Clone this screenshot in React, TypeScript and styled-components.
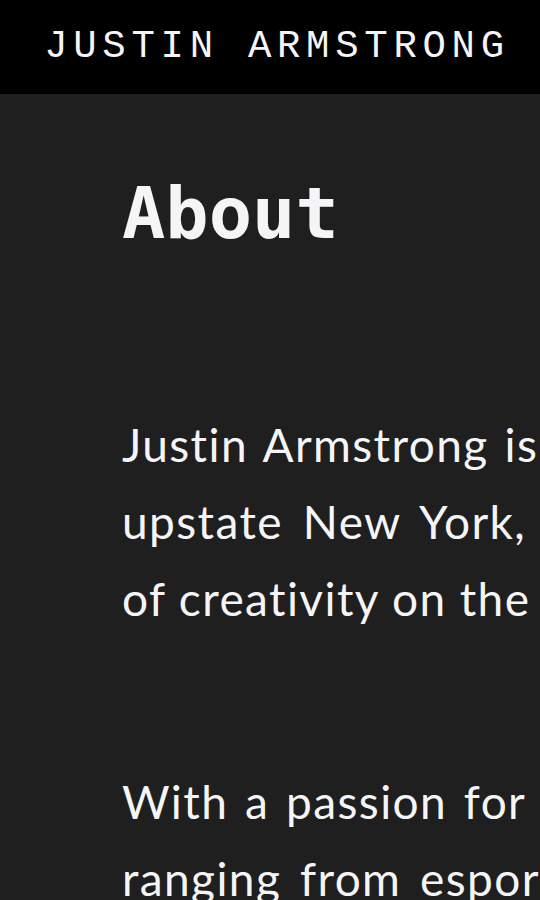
import React from "react";
import styled, { createGlobalStyle } from "styled-components";

const GlobalStyle = createGlobalStyle`
  html, body {
    margin: 0;
    padding: 0;
    background: #1f1f1f;
    overflow-x: hidden;
  }
  body {
    font-family: Lato, "Open Sans", sans-serif;
    color: #f5f5f7;
  }
`;

const Page = styled.div`
  min-height: 900px;
  background: #1f1f1f;
  display: flex;
  flex-direction: column;
`;

const Header = styled.header`
  height: 94px;
  background: #000;
  display: flex;
  align-items: center;
  justify-content: center;
  padding: 0 0 0 14px;
  box-sizing: border-box;
`;

const Brand = styled.div`
  font-family: "Liberation Mono", "DejaVu Sans Mono", monospace;
  font-size: 39px;
  line-height: 1;
  letter-spacing: 5.7px;
  color: #f5f5f7;
  white-space: nowrap;
`;

const Main = styled.main`
  padding: 83px 0 0 122px;
  display: flex;
  flex-direction: column;
  gap: 126px;
`;

const Title = styled.h1`
  font-family: "DejaVu Sans Mono", monospace;
  font-weight: 700;
  font-size: 72px;
  line-height: 72px;
  margin: 0 0 31px;
  color: #f5f5f7;
`;

const Paragraph = styled.p`
  margin: 0;
  width: 850px;
  font-family: Lato, "Open Sans", sans-serif;
  font-size: 46px;
  line-height: 77px;
  letter-spacing: 1.4px;
  text-align: justify;
  color: #f5f5f7;
`;

const nb = "\u00a0";

export default function App() {
  return (
    <>
      <GlobalStyle />
      <Page>
        <Header>
          <Brand>JUSTIN ARMSTRONG</Brand>
        </Header>
        <Main>
          <Title>About</Title>
          <Paragraph>
            {`Justin Armstrong is a digital artist from upstate New York, exploring the limits of${nb}creativity on the web and beyond.`}
          </Paragraph>
          <Paragraph>
            With a passion for motion, his projects ranging from esports broadcasts to art
            installations have reached audiences worldwide.
          </Paragraph>
        </Main>
      </Page>
    </>
  );
}
